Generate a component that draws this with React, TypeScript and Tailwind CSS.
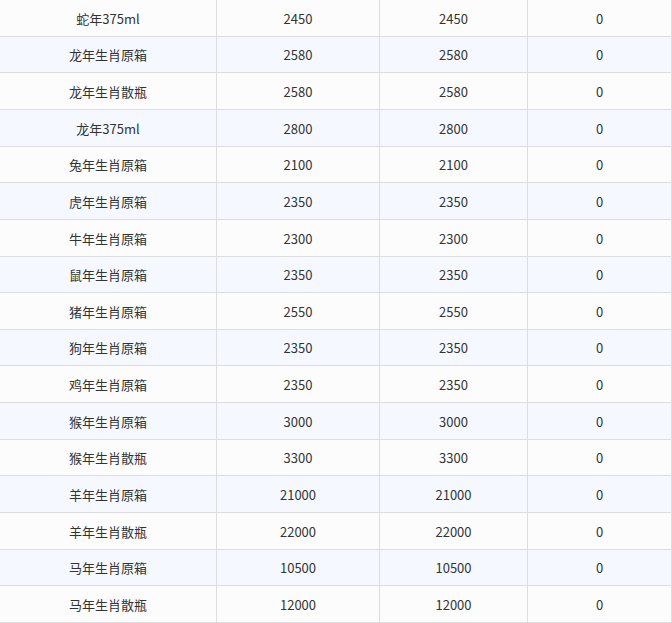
import React from "react";

const rows: [string, string, string, string][] = [
  ["蛇年375ml", "2450", "2450", "0"],
  ["龙年生肖原箱", "2580", "2580", "0"],
  ["龙年生肖散瓶", "2580", "2580", "0"],
  ["龙年375ml", "2800", "2800", "0"],
  ["兔年生肖原箱", "2100", "2100", "0"],
  ["虎年生肖原箱", "2350", "2350", "0"],
  ["牛年生肖原箱", "2300", "2300", "0"],
  ["鼠年生肖原箱", "2350", "2350", "0"],
  ["猪年生肖原箱", "2550", "2550", "0"],
  ["狗年生肖原箱", "2350", "2350", "0"],
  ["鸡年生肖原箱", "2350", "2350", "0"],
  ["猴年生肖原箱", "3000", "3000", "0"],
  ["猴年生肖散瓶", "3300", "3300", "0"],
  ["羊年生肖原箱", "21000", "21000", "0"],
  ["羊年生肖散瓶", "22000", "22000", "0"],
  ["马年生肖原箱", "10500", "10500", "0"],
  ["马年生肖散瓶", "12000", "12000", "0"],
];

export default function App() {
  return (
    <div className="w-[672px] h-[623px] overflow-hidden bg-white">
      <div
        className="w-[672px] mt-[0.2px] text-[13px] text-[#333]"
        style={{ fontFamily: '"Noto Sans CJK SC", "Noto Sans", sans-serif' }}
      >
        {rows.map((r, i) => (
          <div
            key={i}
            className={`grid grid-cols-[217px_163px_148px_144px] h-[36.625px] border-b border-[#dddddd] ${
              i % 2 === 1 ? "bg-[#f5f9ff]" : "bg-[#fcfcfc]"
            }`}
          >
            <div className="flex items-center justify-center pt-[1px] border-r border-[#dddddd]">{r[0]}</div>
            <div className="flex items-center justify-center pt-[1px] border-r border-[#dddddd]">{r[1]}</div>
            <div className="flex items-center justify-center pt-[1px] border-r border-[#dddddd]">{r[2]}</div>
            <div className="flex items-center justify-center pt-[1px] border-r border-[#dddddd]">{r[3]}</div>
          </div>
        ))}
      </div>
    </div>
  );
}
